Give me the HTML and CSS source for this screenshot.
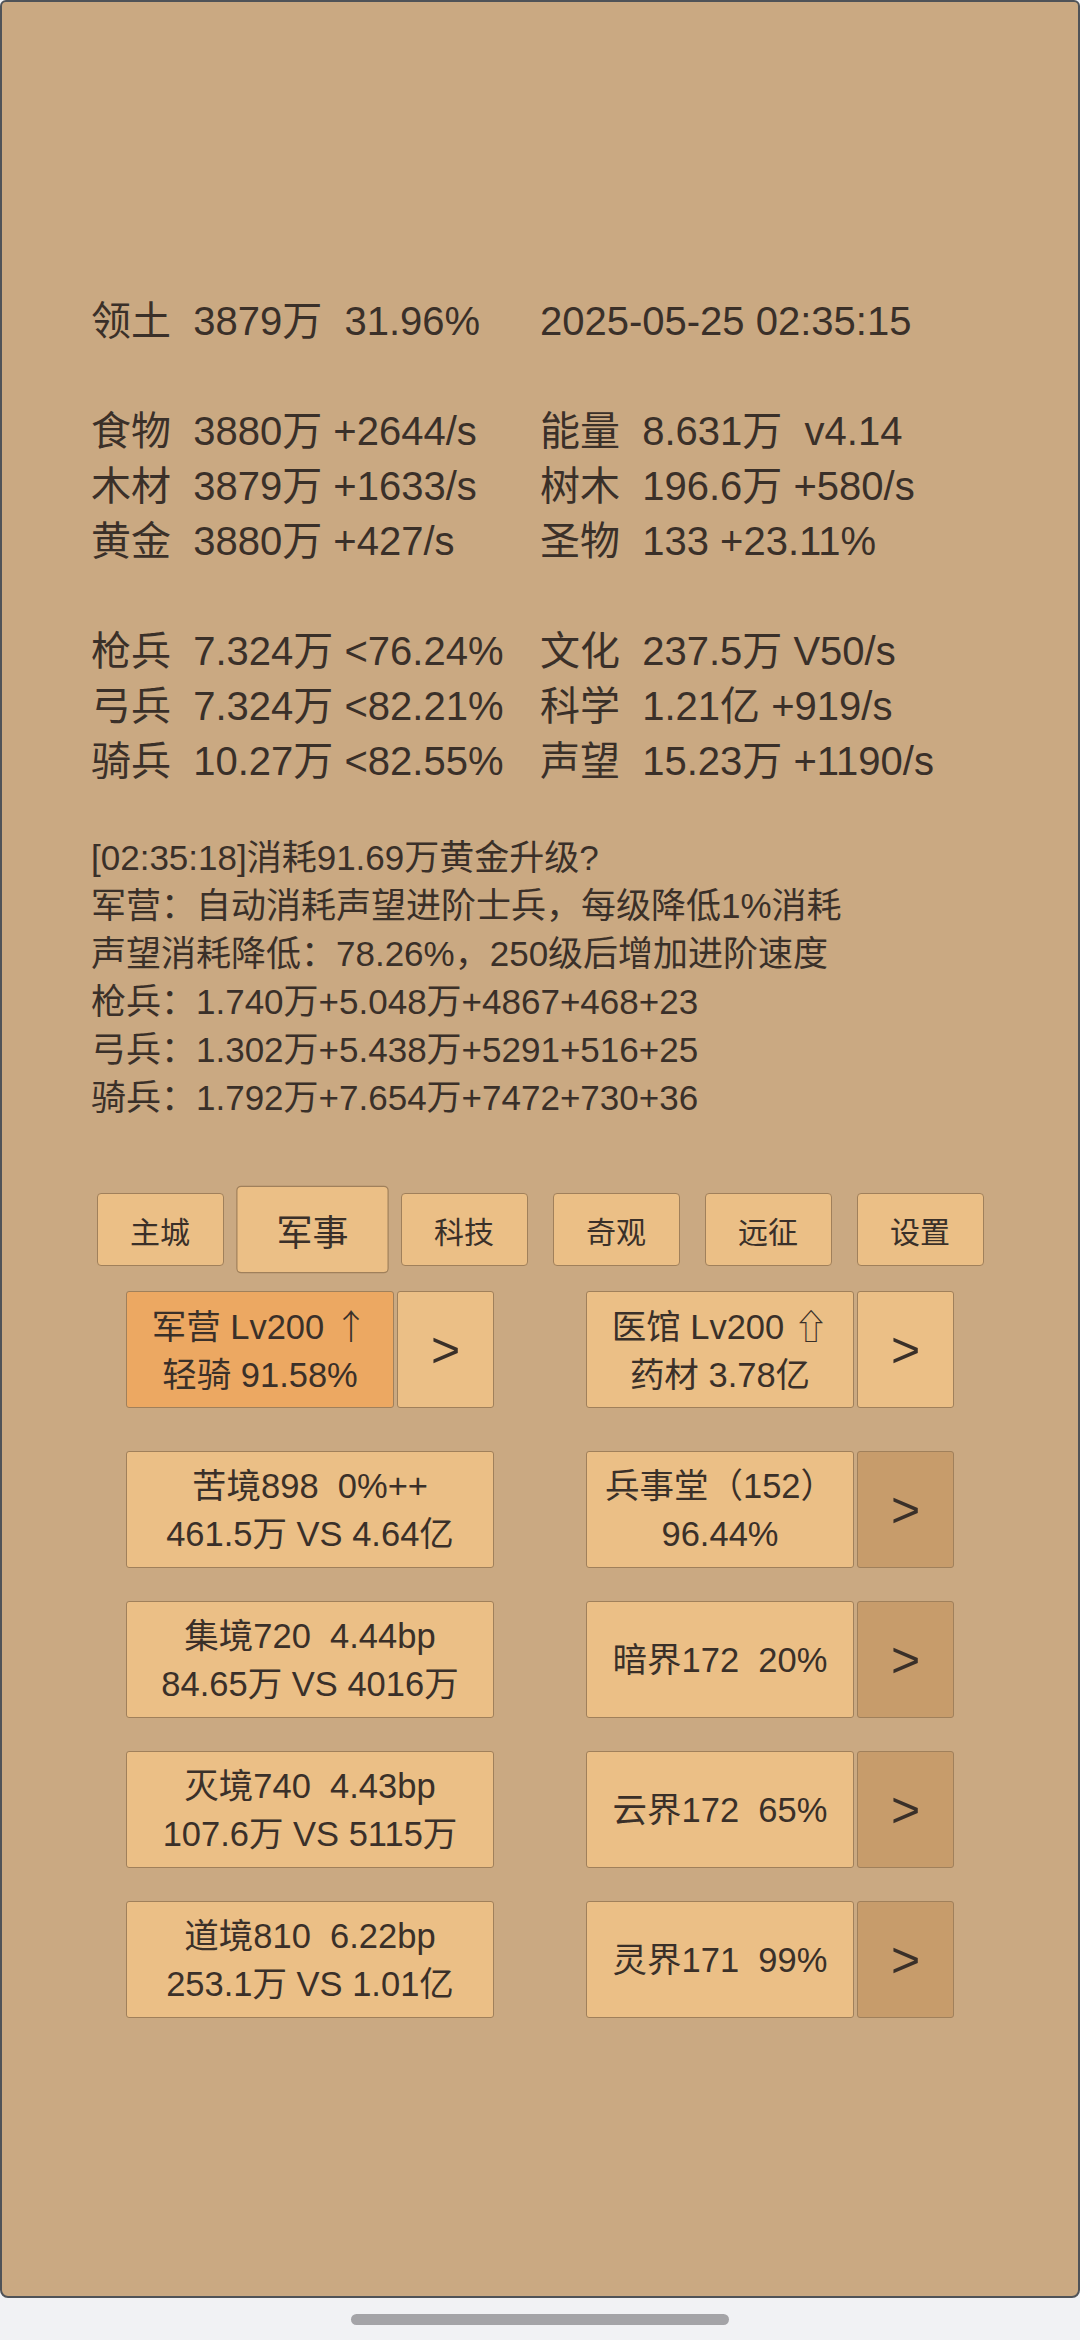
FILE: index.html
```html
<!DOCTYPE html>
<html lang="zh-CN">
<head>
<meta charset="utf-8">
<title>Game</title>
<link rel="stylesheet" href="styles.css">
</head>
<body>
<div class="frame">
  <div class="stats">
    <div class="grp">
      <div class="cell">领土  3879万  31.96%</div>
      <div class="cell">2025-05-25 02:35:15</div>
    </div>
    <div class="grp">
      <div class="cell">食物  3880万 +2644/s</div>
      <div class="cell">能量  8.631万  v4.14</div>
      <div class="cell">木材  3879万 +1633/s</div>
      <div class="cell">树木  196.6万 +580/s</div>
      <div class="cell">黄金  3880万 +427/s</div>
      <div class="cell">圣物  133 +23.11%</div>
    </div>
    <div class="grp">
      <div class="cell">枪兵  7.324万 &lt;76.24%</div>
      <div class="cell">文化  237.5万 V50/s</div>
      <div class="cell">弓兵  7.324万 &lt;82.21%</div>
      <div class="cell">科学  1.21亿 +919/s</div>
      <div class="cell">骑兵  10.27万 &lt;82.55%</div>
      <div class="cell">声望  15.23万 +1190/s</div>
    </div>
  </div>

  <div class="log">
    <div class="line">[02:35:18]消耗91.69万黄金升级?</div>
    <div class="line">军营：自动消耗声望进阶士兵，每级降低1%消耗</div>
    <div class="line">声望消耗降低：78.26%，250级后增加进阶速度</div>
    <div class="line">枪兵：1.740万+5.048万+4867+468+23</div>
    <div class="line">弓兵：1.302万+5.438万+5291+516+25</div>
    <div class="line">骑兵：1.792万+7.654万+7472+730+36</div>
  </div>

  <div class="tabs">
    <div class="tab">主城</div>
    <div class="tab active">军事</div>
    <div class="tab">科技</div>
    <div class="tab">奇观</div>
    <div class="tab">远征</div>
    <div class="tab">设置</div>
  </div>

  <div class="builds">
    <div class="brow first">
      <div class="grpb">
        <div class="box main orange"><span class="txt">军营 Lv200 <span class="up">↑</span><br>轻骑 91.58%</span></div>
        <div class="box arrow">&gt;</div>
      </div>
      <div class="grpb">
        <div class="box main"><span class="txt">医馆 Lv200 <span class="up">⇧</span><br>药材 3.78亿</span></div>
        <div class="box arrow">&gt;</div>
      </div>
    </div>
    <div class="brow">
      <div class="grpb">
        <div class="box wide"><span class="txt">苦境898  0%++<br>461.5万 VS 4.64亿</span></div>
      </div>
      <div class="grpb">
        <div class="box main"><span class="txt">兵事堂（152）<br>96.44%</span></div>
        <div class="box arrow dark">&gt;</div>
      </div>
    </div>
    <div class="brow">
      <div class="grpb">
        <div class="box wide"><span class="txt">集境720  4.44bp<br>84.65万 VS 4016万</span></div>
      </div>
      <div class="grpb">
        <div class="box main"><span class="txt">暗界172  20%</span></div>
        <div class="box arrow dark">&gt;</div>
      </div>
    </div>
    <div class="brow">
      <div class="grpb">
        <div class="box wide"><span class="txt">灭境740  4.43bp<br>107.6万 VS 5115万</span></div>
      </div>
      <div class="grpb">
        <div class="box main"><span class="txt">云界172  65%</span></div>
        <div class="box arrow dark">&gt;</div>
      </div>
    </div>
    <div class="brow">
      <div class="grpb">
        <div class="box wide"><span class="txt">道境810  6.22bp<br>253.1万 VS 1.01亿</span></div>
      </div>
      <div class="grpb">
        <div class="box main"><span class="txt">灵界171  99%</span></div>
        <div class="box arrow dark">&gt;</div>
      </div>
    </div>
  </div>
</div>
<div class="homebar"></div>
</body>
</html>
```

FILE: styles.css
```css
html, body {
  margin: 0;
  padding: 0;
}
body {
  width: 1080px;
  height: 2340px;
  background: #f1f2f4;
  font-family: "Liberation Sans", "Noto Sans CJK SC", "DejaVu Sans", sans-serif;
  color: #3a3029;
  overflow: hidden;
}
.frame {
  box-sizing: border-box;
  width: 1080px;
  height: 2298px;
  background: #caa982;
  border: 2px solid #4f5358;
  border-radius: 6px 6px 8px 8px;
  padding-top: 292px;
  overflow: hidden;
}
.stats {
  font-size: 40px;
  line-height: 55px;
  padding-left: 89px;
}
.grp {
  display: grid;
  grid-template-columns: 449px auto;
}
.grp + .grp {
  margin-top: 55px;
}
.cell {
  white-space: pre;
}
.log {
  margin-top: 45px;
  padding-left: 89px;
  font-size: 35px;
  line-height: 48px;
}
.line {
  white-space: pre;
}
.tabs {
  margin-top: 71px;
  display: flex;
  justify-content: center;
  gap: 25px;
}
.tab {
  box-sizing: border-box;
  width: 127px;
  height: 73px;
  background: #ebbf86;
  border: 1.5px solid #a0805b;
  border-radius: 4px;
  font-size: 30px;
  display: flex;
  align-items: center;
  justify-content: center;
}
.tab.active {
  transform: scale(1.2);
}
.builds {
  margin-top: 25px;
  padding-left: 124px;
}
.brow {
  display: flex;
  gap: 92px;
  height: 117px;
  margin-bottom: 33px;
}
.brow.first {
  margin-bottom: 43px;
}
.grpb {
  display: flex;
  gap: 3px;
  width: 368px;
}
.box {
  box-sizing: border-box;
  height: 117px;
  background: #ebbf86;
  border: 1.5px solid #a0805b;
  border-radius: 3px;
  font-size: 34.5px;
  line-height: 48px;
  text-align: center;
  display: flex;
  align-items: center;
  justify-content: center;
}
.txt {
  white-space: pre;
}
.up {
  font-family: "Noto Sans CJK SC", "DejaVu Sans", sans-serif;
  font-weight: 300;
}
.box.main {
  width: 268px;
}
.box.wide {
  width: 368px;
}
.box.orange {
  background: #eca862;
}
.box.arrow {
  width: 97px;
  font-size: 50px;
}
.box.arrow.dark {
  background: #c79c6b;
}
.homebar {
  width: 378px;
  height: 11px;
  margin: 16px auto 0;
  border-radius: 6px;
  background: #a4a4a7;
}
```
